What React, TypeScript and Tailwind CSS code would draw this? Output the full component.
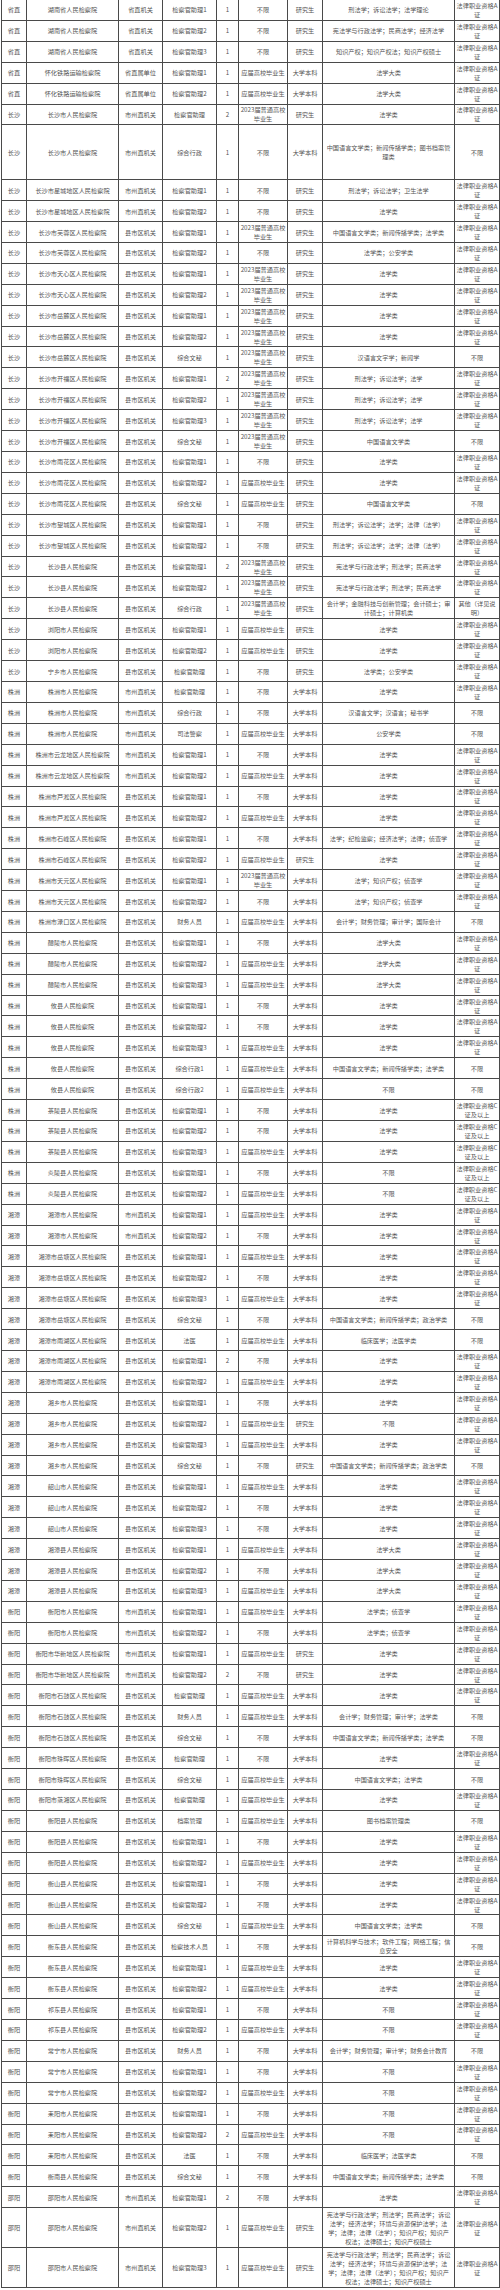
const A = "法律职业资格A\n证";
const C = "法律职业资格C\n证及以上";
const Y = "应届高校毕业生";
const G = "2023届普通高校\n毕业生";
const B = "不限";
const S = "研究生";
const K = "大学本科";
const SZ = "市州直机关";
const X = "县市区机关";
const LAW_LONG =
  "宪法学与行政法学；刑法学；民商法学；诉讼\n法学；经济法学；环境与资源保护法学；法\n学；法律；法律（法学）；知识产权；知识产\n权法；法律硕士；知识产权硕士";

type Row = [string, string, string, string, string, string, string, string, string, string?];

const ROWS: Row[] = [
  ["省直", "湖南省人民检察院", "省直机关", "检察官助理1", "1", B, S, "刑法学；诉讼法学；法学理论", A],
  ["省直", "湖南省人民检察院", "省直机关", "检察官助理2", "1", B, S, "宪法学与行政法学；民商法学；经济法学", A],
  ["省直", "湖南省人民检察院", "省直机关", "检察官助理3", "1", B, S, "知识产权；知识产权法；知识产权硕士", A],
  ["省直", "怀化铁路运输检察院", "省直属单位", "检察官助理1", "1", Y, K, "法学大类", A],
  ["省直", "怀化铁路运输检察院", "省直属单位", "检察官助理2", "1", Y, K, "法学大类", A],
  ["长沙", "长沙市人民检察院", SZ, "检察官助理", "2", G, S, "法学类", A],
  ["长沙", "长沙市人民检察院", SZ, "综合行政", "1", B, K, "中国语言文学类；新闻传播学类；图书档案管\n理类", B, "tall"],
  ["长沙", "长沙市星城地区人民检察院", SZ, "检察官助理1", "1", B, S, "刑法学；诉讼法学；卫生法学", A],
  ["长沙", "长沙市星城地区人民检察院", SZ, "检察官助理2", "1", B, S, "法学类", A],
  ["长沙", "长沙市芙蓉区人民检察院", X, "检察官助理1", "1", G, S, "中国语言文学类；新闻传播学类；法学类", A],
  ["长沙", "长沙市芙蓉区人民检察院", X, "检察官助理2", "1", B, S, "法学类；公安学类", A],
  ["长沙", "长沙市天心区人民检察院", X, "检察官助理1", "1", G, S, "法学类", A],
  ["长沙", "长沙市天心区人民检察院", X, "检察官助理2", "1", G, S, "法学类", A],
  ["长沙", "长沙市岳麓区人民检察院", X, "检察官助理1", "1", G, S, "法学类", A],
  ["长沙", "长沙市岳麓区人民检察院", X, "检察官助理2", "1", G, S, "法学类", A],
  ["长沙", "长沙市岳麓区人民检察院", X, "综合文秘", "1", G, S, "汉语言文字学；新闻学", B],
  ["长沙", "长沙市开福区人民检察院", X, "检察官助理1", "2", G, S, "刑法学；诉讼法学；法学", A],
  ["长沙", "长沙市开福区人民检察院", X, "检察官助理2", "1", G, S, "刑法学；诉讼法学；法学", A],
  ["长沙", "长沙市开福区人民检察院", X, "检察官助理3", "1", G, S, "刑法学；诉讼法学；法学", A],
  ["长沙", "长沙市开福区人民检察院", X, "综合文秘", "1", G, S, "中国语言文学类", B],
  ["长沙", "长沙市雨花区人民检察院", X, "检察官助理1", "1", B, S, "法学类", A],
  ["长沙", "长沙市雨花区人民检察院", X, "检察官助理2", "1", Y, S, "法学类", A],
  ["长沙", "长沙市雨花区人民检察院", X, "综合文秘", "1", Y, S, "中国语言文学类", B],
  ["长沙", "长沙市望城区人民检察院", X, "检察官助理1", "1", B, S, "刑法学；诉讼法学；法学；法律（法学）", A],
  ["长沙", "长沙市望城区人民检察院", X, "检察官助理2", "1", B, S, "刑法学；诉讼法学；法学；法律（法学）", A],
  ["长沙", "长沙县人民检察院", X, "检察官助理1", "2", G, S, "宪法学与行政法学；刑法学；民商法学", A],
  ["长沙", "长沙县人民检察院", X, "检察官助理2", "1", G, S, "宪法学与行政法学；刑法学；民商法学", A],
  ["长沙", "长沙县人民检察院", X, "综合行政", "1", G, S, "会计学；金融科技与创新管理；会计硕士；审\n计硕士；计算机类", "其他（详见说\n明）"],
  ["长沙", "浏阳市人民检察院", X, "检察官助理1", "1", Y, S, "法学类", A],
  ["长沙", "浏阳市人民检察院", X, "检察官助理2", "1", Y, S, "法学类", A],
  ["长沙", "宁乡市人民检察院", X, "检察官助理", "1", B, S, "法学类；公安学类", A],
  ["株洲", "株洲市人民检察院", SZ, "检察官助理", "1", B, K, "法学类", A],
  ["株洲", "株洲市人民检察院", SZ, "综合行政", "1", B, K, "汉语言文学；汉语言；秘书学", B],
  ["株洲", "株洲市人民检察院", SZ, "司法警察", "1", Y, K, "公安学类", B],
  ["株洲", "株洲市云龙地区人民检察院", SZ, "检察官助理1", "1", B, K, "法学类", A],
  ["株洲", "株洲市云龙地区人民检察院", SZ, "检察官助理2", "1", Y, K, "法学类", A],
  ["株洲", "株洲市芦淞区人民检察院", X, "检察官助理1", "1", B, K, "法学类", A],
  ["株洲", "株洲市芦淞区人民检察院", X, "检察官助理2", "1", Y, K, "法学类", A],
  ["株洲", "株洲市石峰区人民检察院", X, "检察官助理1", "1", B, K, "法学；纪检监察；经济法学；法律；侦查学", A],
  ["株洲", "株洲市石峰区人民检察院", X, "检察官助理2", "1", Y, S, "法学类", A],
  ["株洲", "株洲市天元区人民检察院", X, "检察官助理1", "1", G, K, "法学；知识产权；侦查学", A],
  ["株洲", "株洲市天元区人民检察院", X, "检察官助理2", "1", B, K, "法学；知识产权；侦查学", A],
  ["株洲", "株洲市渌口区人民检察院", X, "财务人员", "1", Y, K, "会计学；财务管理；审计学；国际会计", B],
  ["株洲", "醴陵市人民检察院", X, "检察官助理1", "1", B, K, "法学大类", A],
  ["株洲", "醴陵市人民检察院", X, "检察官助理2", "1", Y, K, "法学大类", A],
  ["株洲", "醴陵市人民检察院", X, "检察官助理3", "1", Y, K, "法学大类", A],
  ["株洲", "攸县人民检察院", X, "检察官助理1", "1", B, K, "法学类", A],
  ["株洲", "攸县人民检察院", X, "检察官助理2", "1", B, K, "法学类", A],
  ["株洲", "攸县人民检察院", X, "检察官助理3", "1", Y, K, "法学类", A],
  ["株洲", "攸县人民检察院", X, "综合行政1", "1", Y, K, "中国语言文学类；新闻传播学类；法学类", B],
  ["株洲", "攸县人民检察院", X, "综合行政2", "1", Y, K, B, B],
  ["株洲", "茶陵县人民检察院", X, "检察官助理1", "1", B, K, "法学类", C],
  ["株洲", "茶陵县人民检察院", X, "检察官助理2", "1", B, K, "法学类", C],
  ["株洲", "茶陵县人民检察院", X, "检察官助理3", "1", Y, K, "法学类", C],
  ["株洲", "炎陵县人民检察院", X, "检察官助理1", "1", B, K, B, C],
  ["株洲", "炎陵县人民检察院", X, "检察官助理2", "1", Y, K, B, C],
  ["湘潭", "湘潭市人民检察院", SZ, "检察官助理1", "1", Y, K, "法学类", A],
  ["湘潭", "湘潭市人民检察院", SZ, "检察官助理2", "1", B, K, "法学类", A],
  ["湘潭", "湘潭市岳塘区人民检察院", X, "检察官助理1", "1", Y, K, "法学类", A],
  ["湘潭", "湘潭市岳塘区人民检察院", X, "检察官助理2", "1", B, K, "法学类", A],
  ["湘潭", "湘潭市岳塘区人民检察院", X, "检察官助理3", "1", Y, K, "法学类", A],
  ["湘潭", "湘潭市岳塘区人民检察院", X, "综合文秘", "1", B, K, "中国语言文学类；新闻传播学类；政治学类", B],
  ["湘潭", "湘潭市雨湖区人民检察院", X, "法医", "1", Y, K, "临床医学；法医学类", B],
  ["湘潭", "湘潭市雨湖区人民检察院", X, "检察官助理1", "2", B, K, "法学类", A],
  ["湘潭", "湘潭市雨湖区人民检察院", X, "检察官助理2", "1", Y, K, "法学类", A],
  ["湘潭", "湘乡市人民检察院", X, "检察官助理1", "1", B, K, "法学类", A],
  ["湘潭", "湘乡市人民检察院", X, "检察官助理2", "1", Y, S, B, A],
  ["湘潭", "湘乡市人民检察院", X, "检察官助理3", "1", Y, K, "法学类", A],
  ["湘潭", "湘乡市人民检察院", X, "综合文秘", "1", B, S, "中国语言文学类；新闻传播学类；政治学类", B],
  ["湘潭", "韶山市人民检察院", X, "检察官助理1", "1", Y, K, "法学类", A],
  ["湘潭", "韶山市人民检察院", X, "检察官助理2", "1", B, K, "法学类", A],
  ["湘潭", "韶山市人民检察院", X, "检察官助理3", "1", B, K, "法学类", A],
  ["湘潭", "湘潭县人民检察院", X, "检察官助理1", "1", Y, K, "法学大类", A],
  ["湘潭", "湘潭县人民检察院", X, "检察官助理2", "1", B, K, "法学大类", A],
  ["湘潭", "湘潭县人民检察院", X, "检察官助理3", "1", Y, K, "法学大类", A],
  ["衡阳", "衡阳市人民检察院", SZ, "检察官助理1", "1", Y, K, "法学类；侦查学", A],
  ["衡阳", "衡阳市人民检察院", SZ, "检察官助理2", "1", B, K, "法学类；侦查学", A],
  ["衡阳", "衡阳市华新地区人民检察院", SZ, "检察官助理1", "1", Y, S, "法学类", A],
  ["衡阳", "衡阳市华新地区人民检察院", SZ, "检察官助理2", "2", B, S, "法学类", A],
  ["衡阳", "衡阳市石鼓区人民检察院", X, "检察官助理", "1", Y, K, "法学类", A],
  ["衡阳", "衡阳市石鼓区人民检察院", X, "财务人员", "1", Y, K, "会计学；财务管理；审计学；法学类", B],
  ["衡阳", "衡阳市石鼓区人民检察院", X, "综合文秘", "1", B, K, "中国语言文学类；新闻传播学类；法学类", B],
  ["衡阳", "衡阳市珠晖区人民检察院", X, "检察官助理", "1", B, K, "法学类", A],
  ["衡阳", "衡阳市珠晖区人民检察院", X, "综合文秘", "1", Y, K, "中国语言文学类；法学类", B],
  ["衡阳", "衡阳市蒸湘区人民检察院", X, "检察官助理", "1", Y, K, "法学类", A],
  ["衡阳", "衡阳县人民检察院", X, "档案管理", "1", Y, K, "图书档案管理类", B],
  ["衡阳", "衡阳县人民检察院", X, "检察官助理1", "1", B, K, "法学类", A],
  ["衡阳", "衡阳县人民检察院", X, "检察官助理2", "1", Y, K, "法学类", A],
  ["衡阳", "衡山县人民检察院", X, "检察官助理1", "1", B, K, "法学类", A],
  ["衡阳", "衡山县人民检察院", X, "检察官助理2", "1", B, K, "法学类", A],
  ["衡阳", "衡山县人民检察院", X, "综合文秘", "1", Y, K, "中国语言文学类；法学类", B],
  ["衡阳", "衡东县人民检察院", X, "检察技术人员", "1", B, K, "计算机科学与技术；软件工程；网络工程；信\n息安全", B],
  ["衡阳", "衡东县人民检察院", X, "检察官助理1", "1", Y, K, "法学类", A],
  ["衡阳", "衡东县人民检察院", X, "检察官助理2", "1", Y, K, "法学类", A],
  ["衡阳", "祁东县人民检察院", X, "检察官助理1", "1", B, K, B, A],
  ["衡阳", "祁东县人民检察院", X, "检察官助理2", "1", Y, K, B, A],
  ["衡阳", "常宁市人民检察院", X, "财务人员", "1", B, K, "会计学；财务管理；审计学；财务会计教育", B],
  ["衡阳", "常宁市人民检察院", X, "检察官助理1", "1", B, K, B, A],
  ["衡阳", "常宁市人民检察院", X, "检察官助理2", "1", Y, K, B, A],
  ["衡阳", "耒阳市人民检察院", X, "检察官助理1", "1", B, K, B, A],
  ["衡阳", "耒阳市人民检察院", X, "检察官助理2", "2", Y, K, B, A],
  ["衡阳", "耒阳市人民检察院", X, "法医", "1", B, K, "临床医学；法医学类", B],
  ["衡阳", "衡南县人民检察院", X, "综合文秘", "1", B, K, "中国语言文学类；新闻传播学类；法学类", B],
  ["邵阳", "邵阳市人民检察院", SZ, "检察官助理1", "2", B, K, "法学类", A],
  ["邵阳", "邵阳市人民检察院", SZ, "检察官助理2", "1", Y, S, LAW_LONG, A, "quad"],
  ["邵阳", "邵阳市人民检察院", SZ, "检察官助理3", "1", Y, S, LAW_LONG, A, "quad"],
];

const HEIGHTS: Record<string, string> = {
  normal: "h-[20.92px]",
  tall: "h-[54.8px]",
  quad: "h-[40px]",
};

function Cell({ text, first }: { text: string; first?: boolean }) {
  return (
    <div
      className={`flex items-center justify-center whitespace-pre-line border-b border-r border-[#4a4a4a] px-[1px] text-center leading-[9px] ${
        first ? "border-l" : ""
      }`}
    >
      {text}
    </div>
  );
}

export default function App() {
  return (
    <div className="min-h-screen bg-white pl-[1px] font-['Noto_Sans_CJK_SC',sans-serif] text-[6.2px] text-[#555]">
      <div className="w-[499px]">
        {ROWS.map((row, i) => {
          const h = HEIGHTS[row[9] ?? "normal"];
          return (
            <div
              key={i}
              className={`grid grid-cols-[26px_92px_44px_54px_22px_49px_35px_132px_45px] ${h}`}
            >
              {row.slice(0, 9).map((t, j) => (
                <Cell key={j} text={t as string} first={j === 0} />
              ))}
            </div>
          );
        })}
      </div>
    </div>
  );
}
